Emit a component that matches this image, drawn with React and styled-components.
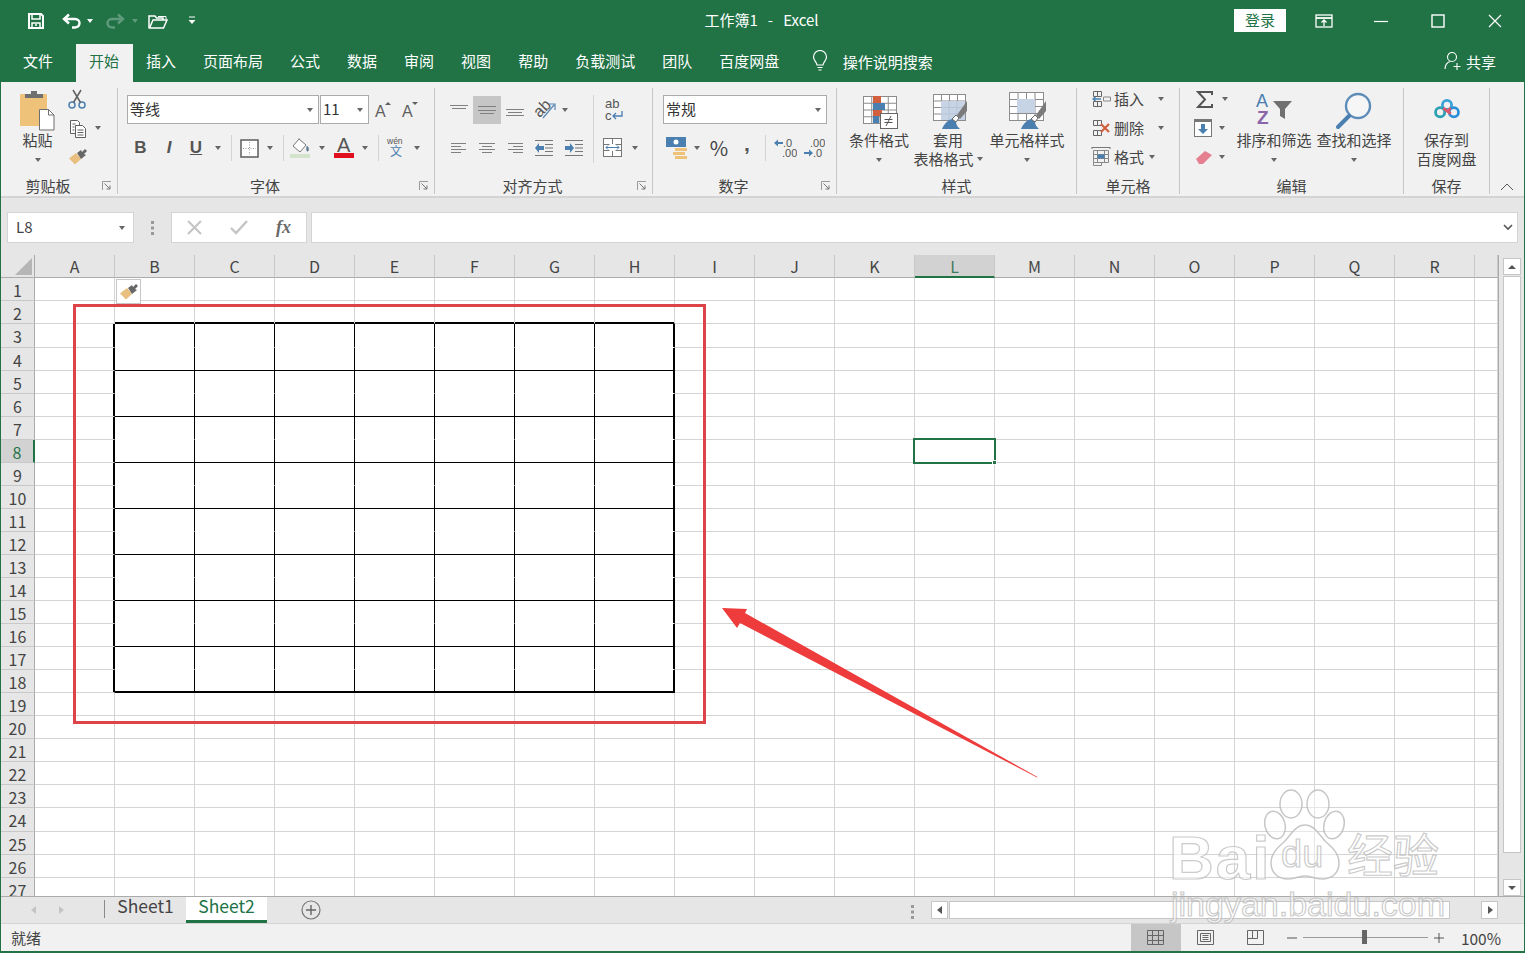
import React from "react";
import styled, { createGlobalStyle } from "styled-components";

const GREEN = "#217346";
const FONT = `"Noto Sans CJK SC", "Noto Sans", sans-serif`;
const INK = "#444";

const Global = createGlobalStyle`
  html, body { margin: 0; padding: 0; background: #fff; overflow: hidden; }
  * { box-sizing: border-box; }
`;

const Frame = styled.div`
  position: relative;
  width: 1525px;
  height: 953px;
  overflow: hidden;
  display: flex;
  flex-direction: column;
  border: solid ${GREEN};
  border-width: 0 1px 2px 1px;
  font-family: ${FONT};
  font-size: 15px;
  color: ${INK};
  background: #e6e6e6;
`;

const Caret = styled.i`
  flex: none;
  display: block;
  width: 0;
  height: 0;
  margin-left: ${(p) => p.$ml || 0}px;
  border-style: solid;
  border-width: 4px 3.5px 0;
  border-color: ${(p) => p.$c || "#666"} transparent transparent;
`;

/* ---------- title bar ---------- */
const TitleBar = styled.div`
  height: 41px;
  margin: 0 -1px;
  background: ${GREEN};
  color: #fff;
  display: grid;
  grid-template-columns: 1fr auto 1fr;
  align-items: center;
`;
const Quick = styled.div`
  display: flex;
  align-items: center;
  padding-left: 27px;
`;
const Slot = styled.span`
  display: inline-flex;
  align-items: center;
  justify-content: center;
  flex: none;
  width: ${(p) => p.$w}px;
  height: ${(p) => p.$h || 26}px;
  margin-left: ${(p) => p.$ml || 0}px;
  background: ${(p) => (p.$on ? "#c6c6c6" : "transparent")};
`;
const Title = styled.div`
  font-size: 15px;
  white-space: pre;
  color: #fff;
  padding: 0 2px 2px 0;
`;
const WinControls = styled.div`
  display: flex;
  justify-content: flex-end;
  align-items: center;
  padding-right: 2px;
`;
const Login = styled.button`
  width: 52px;
  height: 23px;
  margin-right: 9px;
  border: 0;
  padding: 0 0 2px;
  background: #fff;
  color: ${GREEN};
  font: 15px/19px ${FONT};
`;

/* ---------- tab row ---------- */
const TabRow = styled.div`
  height: 41px;
  margin: 0 -1px;
  padding-left: 9.5px;
  background: ${GREEN};
  display: flex;
  align-items: flex-end;
`;
const RibbonTab = styled.div`
  height: 38px;
  padding: 0 13.5px;
  margin-right: ${(p) => p.$mr || 0}px;
  line-height: 34px;
  color: ${(p) => (p.$active ? GREEN : "#fff")};
  background: ${(p) => (p.$active ? "#f1f1f1" : "transparent")};
  white-space: nowrap;
`;
const SearchHint = styled.div`
  display: flex;
  align-items: center;
  height: 38px;
  padding-bottom: 4px;
  margin-left: 19px;
  gap: 15px;
  color: #fff;
`;
const Share = styled.div`
  margin-left: auto;
  margin-right: 29px;
  display: flex;
  align-items: center;
  height: 38px;
  padding-bottom: 4px;
  gap: 4px;
  color: #fff;
`;

/* ---------- ribbon ---------- */
const Ribbon = styled.div`
  height: 116px;
  padding-top: 6px;
  display: flex;
  background: #f1f1f1;
  border-bottom: 2px solid #d4d4d4;
`;
const Group = styled.section`
  flex: none;
  width: ${(p) => p.$w}px;
  height: 106px;
  display: flex;
  flex-direction: column;
  border-right: 1px solid #c6c6c6;
`;
const GroupBody = styled.div`
  height: 89px;
  display: flex;
  padding-left: ${(p) => p.$pl || 0}px;
`;
const GroupFoot = styled.div`
  height: 17px;
  display: flex;
  align-items: center;
`;
const GroupLabel = styled.div`
  flex: 1;
  text-align: center;
  font-size: 15px;
  line-height: 17px;
`;
const Launcher = styled.span`
  flex: none;
  width: 22px;
  display: flex;
  justify-content: center;
  padding-left: 2px;
`;
const Big = styled.div`
  flex: none;
  width: ${(p) => p.$w}px;
  padding-top: 2px;
  display: flex;
  flex-direction: column;
  align-items: center;
  text-align: center;
`;
const BigIcon = styled.div`
  height: 41px;
  padding-bottom: ${(p) => p.$pb || 0}px;
  display: flex;
  align-items: center;
  justify-content: center;
`;
const BigLine = styled.div`
  height: 19px;
  padding-bottom: 2px;
  line-height: 17px;
  font-size: 15px;
  white-space: nowrap;
  display: flex;
  align-items: center;
  justify-content: center;
  gap: 3px;
`;
const BigCaret = styled(BigLine)`
  padding-bottom: 0;
`;
const ToolCol = styled.div`
  flex: none;
  width: ${(p) => (p.$w ? p.$w + "px" : "auto")};
  padding-left: ${(p) => p.$pl || 0}px;
  display: flex;
  flex-direction: column;
  gap: 7px;
`;
const SmallRow = styled.div`
  height: 22px;
  display: flex;
  align-items: center;
`;
const RowsCol = styled.div`
  padding-top: 7px;
  display: flex;
  flex-direction: column;
  gap: 11px;
  flex: none;
  width: ${(p) => (p.$w ? p.$w + "px" : "auto")};
`;
const ToolRow = styled.div`
  display: flex;
  align-items: ${(p) => (p.$tall ? "flex-end" : "center")};
  height: ${(p) => (p.$tall ? 29 : 26)}px;
`;
const Sep = styled.span`
  flex: none;
  width: 1px;
  height: 26px;
  background: #d4d4d4;
  margin: 0 ${(p) => p.$m}px 0 ${(p) => p.$m}px;
`;
const VSep = styled.div`
  flex: none;
  width: 1px;
  height: 68px;
  margin-top: 7px;
  background: #d4d4d4;
`;
const Combo = styled.div`
  flex: none;
  width: ${(p) => p.$w}px;
  height: 29px;
  background: #fff;
  border: 1px solid #ababab;
  margin-right: ${(p) => p.$mr || 0}px;
  padding: 0 5px 2px 2px;
  display: flex;
  align-items: center;
  justify-content: space-between;
  font-size: 15px;
  color: #333;
  ${Caret} { margin-top: 2px; }
`;
const TextSpan = styled.span`
  font-size: ${(p) => p.$s || 15}px;
  margin-left: ${(p) => p.$ml || 0}px;
  padding-bottom: 2px;
  white-space: nowrap;
`;
const Collapse = styled.div`
  margin-left: 10px;
  align-self: flex-end;
  margin-bottom: 1px;
`;

/* ---------- formula bar ---------- */
const FormulaBar = styled.div`
  height: 57px;
  padding: 14px 6px 0;
  display: flex;
  background: #e6e6e6;
`;
const InputBox = styled.div`
  flex: ${(p) => (p.$w ? "none" : "1")};
  width: ${(p) => (p.$w ? p.$w + "px" : "auto")};
  height: 31px;
  background: #fff;
  border: 1px solid #d4d4d4;
  display: flex;
  align-items: center;
  justify-content: ${(p) => (p.$between ? "space-between" : "flex-start")};
  padding: ${(p) => p.$pad || "0"};
  font-size: 15px;
  margin-left: ${(p) => p.$ml || 0}px;
  ${Caret} { margin-top: 2px; }
`;
const Grip = styled.div`
  flex: none;
  width: 37px;
  display: flex;
  justify-content: center;
  align-items: center;
  height: 31px;
`;

/* ---------- sheet ---------- */
const SheetArea = styled.div`
  height: 641px;
  display: flex;
  overflow: hidden;
`;
const SheetGrid = styled.div`
  flex: none;
  width: 1497px;
  height: 641px;
  overflow: hidden;
  display: grid;
  grid-template-columns: 34px repeat(18, 80px) 23px;
  grid-template-rows: 23.4px;
  grid-auto-rows: 23.06px;
  background: #fff;
`;
const Corner = styled.div`
  background: #e6e6e6;
  border-right: 1px solid #ababab;
  border-bottom: 1px solid #ababab;
  display: flex;
  align-items: flex-end;
  justify-content: flex-end;
  padding: 0 2px 2px 0;
`;
const ColHead = styled.div`
  background: ${(p) => (p.$on ? "#d2d2d2" : "#e6e6e6")};
  border-right: 1px solid #c8c8c8;
  border-bottom: ${(p) => (p.$on ? `2px solid ${GREEN}` : "1px solid #ababab")};
  color: ${(p) => (p.$on ? "#3f7a5c" : INK)};
  text-align: center;
  font-size: 16px;
  line-height: 22px;
`;
const RowHead = styled.div`
  background: ${(p) => (p.$on ? "#d2d2d2" : "#e6e6e6")};
  border-right: ${(p) => (p.$on ? `2px solid ${GREEN}` : "1px solid #ababab")};
  border-bottom: 1px solid #c8c8c8;
  color: ${(p) => (p.$on ? GREEN : INK)};
  text-align: center;
  font-size: 16px;
  line-height: 24px;
  overflow: hidden;
`;
const Cell = styled.div`
  position: relative;
  background: #fff;
  border-right: 1px solid ${(p) => p.$r};
  border-bottom: 1px solid ${(p) => p.$b};
  box-shadow: ${(p) => p.$shadow || "none"};
`;
const Selection = styled.div`
  position: absolute;
  z-index: 3;
  left: -2px;
  top: -2px;
  width: 83px;
  height: 26px;
  border: 2px solid ${GREEN};
`;
const Handle = styled.div`
  position: absolute;
  right: -3px;
  bottom: -3px;
  width: 5px;
  height: 5px;
  background: ${GREEN};
  border: 1px solid #fff;
`;
const PasteBadge = styled.div`
  position: absolute;
  z-index: 3;
  left: 1px;
  top: 1px;
  width: 25px;
  height: 25px;
  background: #fff;
  border: 1px solid #c6c6c6;
  display: flex;
  align-items: center;
  justify-content: center;
`;
const VScroll = styled.div`
  flex: 1;
  padding: 3px 0 0 4px;
  display: flex;
  flex-direction: column;
  background: #e6e6e6;
  border-left: 1px solid #ababab;
`;
const ScrollBtn = styled.div`
  flex: none;
  width: ${(p) => p.$w}px;
  height: ${(p) => p.$h}px;
  background: #fff;
  border: 1px solid #c6c6c6;
  display: flex;
  align-items: center;
  justify-content: center;
  margin-top: ${(p) => p.$mt || 0}px;
  margin-left: ${(p) => p.$ml || 0}px;
`;

/* ---------- tab bar ---------- */
const SheetTabs = styled.div`
  height: 28px;
  display: flex;
  align-items: flex-start;
  background: #e6e6e6;
  border-top: 1px solid #ababab;
  border-bottom: 1px solid #d4d4d4;
  padding-left: 19px;
`;
const NavSep = styled.span`
  flex: none;
  width: 1px;
  height: 18px;
  margin: 3px 0 0 30px;
  background: #8a8a8a;
`;
const SheetTab = styled.div`
  flex: none;
  width: 81px;
  height: 26px;
  text-align: center;
  font-size: 17.5px;
  line-height: 18px;
  background: ${(p) => (p.$active ? "#fff" : "transparent")};
  color: ${(p) => (p.$active ? GREEN : INK)};
  border-bottom: ${(p) => (p.$active ? `3px solid ${GREEN}` : "0")};
`;
const AddSheet = styled.div`
  flex: none;
  margin: 3px 0 0 34px;
  height: 20px;
`;
const TabGrip = styled.div`
  flex: none;
  margin: 6px 0 0 auto;
  height: 16px;
`;
const HScroll = styled.div`
  flex: none;
  width: 567px;
  height: 18px;
  margin: 4px 26px 0 16px;
  display: flex;
`;
const HThumb = styled.div`
  flex: none;
  width: 501px;
  margin-left: 1px;
  height: 18px;
  background: #fff;
  border: 1px solid #c6c6c6;
`;

/* ---------- status bar ---------- */
const StatusBar = styled.div`
  flex: 1;
  display: flex;
  align-items: center;
  background: #f1f1f1;
  font-size: 15px;
  padding-left: 10px;
`;
const StatusRight = styled.div`
  margin-left: auto;
  display: flex;
  align-items: center;
  height: 100%;
  padding-right: 23px;
`;
const ViewBtn = styled.div`
  flex: none;
  width: 50px;
  height: 100%;
  display: flex;
  align-items: center;
  justify-content: center;
  background: ${(p) => (p.$on ? "#c6c6c6" : "transparent")};
`;
const Zoomer = styled.div`
  position: relative;
  flex: none;
  width: 125px;
  height: 1px;
  background: #9a9a9a;
`;
const ZoomThumb = styled.div`
  position: absolute;
  left: 59px;
  top: -7px;
  width: 5px;
  height: 14px;
  background: #666;
`;
const ZoomPct = styled.div`
  margin-left: 11px;
  font-size: 15.5px;
`;

/* ---------- overlays ---------- */
const RedBox = styled.div`
  position: absolute;
  z-index: 5;
  left: 72px;
  top: 304px;
  width: 633px;
  height: 420px;
  border: 3.5px solid #dc4449;
  pointer-events: none;
`;
const ArrowLayer = styled.svg`
  position: absolute;
  z-index: 5;
  left: 714px;
  top: 600px;
`;
const Watermark = styled.div`
  position: absolute;
  z-index: 6;
  left: 1164px;
  top: 785px;
  width: 290px;
  height: 140px;
  pointer-events: none;
`;
const Mark = styled.span`
  position: absolute;
  left: ${(p) => p.$x}px;
  top: ${(p) => p.$y}px;
  font-family: ${(p) => p.$f || `"Liberation Sans", sans-serif`};
  font-size: ${(p) => p.$s}px;
  font-weight: ${(p) => p.$wt || 400};
  line-height: 1;
  letter-spacing: ${(p) => p.$ls || 0}px;
  color: rgba(255, 255, 255, 0.55);
  -webkit-text-stroke: 1.2px rgba(185, 185, 185, 0.75);
  white-space: nowrap;
`;
const PawSvg = styled.svg`
  position: absolute;
  left: 90px;
  top: 4px;
`;

/* ---------- icons ---------- */
const G = "#5f5f5f";
const BLUE = "#4a7fb0";

const Save = () => (
  <svg width="18" height="18" viewBox="0 0 18 18">
    <path d="M2 2h12l2 2v12H2z" fill="none" stroke="#fff" strokeWidth="2" />
    <path d="M5 3v4h8V3" fill="none" stroke="#fff" strokeWidth="1.5" />
    <path d="M5 16v-5h8v5M8 13h2" fill="none" stroke="#fff" strokeWidth="1.5" />
  </svg>
);
const Undo = ({ c = "#fff", flip }) => (
  <svg width="20" height="16" viewBox="0 0 20 16" transform={flip ? "scale(-1 1)" : undefined}>
    <path d="M7 1.5 2 6l5 4.5M2.5 6H13c6 0 6 8 0 8.5H10" fill="none" stroke={c} strokeWidth="2.4" />
  </svg>
);
const Folder = () => (
  <svg width="20" height="16" viewBox="0 0 20 16">
    <path d="M1 15V3h6l1.5 2H15v2" fill="none" stroke="#fff" strokeWidth="1.5" />
    <path d="M1.5 15 5 7h14l-3.5 8z" fill="none" stroke="#fff" strokeWidth="1.5" />
    <path d="M10 3.5h8V6" fill="none" stroke="#fff" strokeWidth="1" />
  </svg>
);
const QatMore = () => (
  <svg width="8" height="9" viewBox="0 0 8 9">
    <path d="M1 1h6" stroke="#fff" strokeWidth="1" />
    <path d="M0.5 4h7L4 8z" fill="#fff" />
  </svg>
);
const RibbonMode = () => (
  <svg width="18" height="14" viewBox="0 0 18 14">
    <rect x="1" y="1" width="16" height="12" fill="none" stroke="#fff" strokeWidth="1.3" />
    <path d="M1 4h16" stroke="#fff" strokeWidth="1.8" />
    <path d="M9 12V6M6.5 8.5 9 6l2.5 2.5" fill="none" stroke="#fff" strokeWidth="1.3" />
  </svg>
);
const MinI = () => (
  <svg width="14" height="14" viewBox="0 0 14 14"><path d="M0 7.5h14" stroke="#fff" strokeWidth="1.2" /></svg>
);
const MaxI = () => (
  <svg width="14" height="14" viewBox="0 0 14 14"><rect x="1" y="1" width="12" height="12" fill="none" stroke="#fff" strokeWidth="1.4" /></svg>
);
const CloseI = () => (
  <svg width="14" height="14" viewBox="0 0 14 14"><path d="M1 1l12 12M13 1 1 13" stroke="#fff" strokeWidth="1.2" /></svg>
);
const Bulb = () => (
  <svg width="16" height="22" viewBox="0 0 16 22">
    <path d="M5 15c0-3-3.5-4-3.5-8a6.5 6.5 0 0 1 13 0c0 4-3.5 5-3.5 8z" fill="none" stroke="#fff" strokeWidth="1.2" />
    <path d="M5.5 17.5h5M6.5 20h3" stroke="#fff" strokeWidth="1.2" />
  </svg>
);
const Person = () => (
  <svg width="18" height="20" viewBox="0 0 18 20">
    <circle cx="8" cy="6" r="4.5" fill="none" stroke="#fff" strokeWidth="1.1" />
    <path d="M1 18c0-4 2.5-7 5-7.5M13 12v7M9.5 15.5h7" fill="none" stroke="#fff" strokeWidth="1.1" />
  </svg>
);
const Corner3 = () => (
  <svg width="10" height="10" viewBox="0 0 10 10">
    <path d="M.5 9V.5H9" fill="none" stroke="#9a9a9a" />
    <path d="M2.5 2.5 8 8M8 4.5V8H4.5" fill="none" stroke="#777" />
  </svg>
);
const Paste = () => (
  <svg width="35" height="41" viewBox="0 0 35 41">
    <rect x="0" y="4" width="27" height="32" rx="1" fill="#efc27a" />
    <path d="M5 8V4h6V1h6v3h6v4z" fill="#6f6f6f" />
    <path d="M19.5 19.5h9l5.500 5.500v15h-14.500z" fill="#fff" stroke="#6f6f6f" />
    <path d="M28.500 19.500v5.500h5.500" fill="none" stroke="#6f6f6f" />
  </svg>
);
const Scissors = () => (
  <svg width="18" height="20" viewBox="0 0 18 20">
    <circle cx="4" cy="16" r="3" fill="none" stroke={BLUE} strokeWidth="1.5" />
    <circle cx="14" cy="16" r="3" fill="none" stroke={BLUE} strokeWidth="1.5" />
    <path d="M5.5 13.5 13 1M12.5 13.5 5 1" stroke={G} strokeWidth="1.5" />
  </svg>
);
const Copy = () => (
  <svg width="18" height="19" viewBox="0 0 18 19" fill="#fff" stroke={G}>
    <path d="M1.5 1.5h7l2 2v11h-9z" />
    <path d="M6.5 6.5h7l3 3v9h-10z" />
    <path d="M3.5 5h3M3.5 8h2M3.5 11h2M8.5 11h6M8.5 13.5h6M8.5 16h6" fill="none" />
  </svg>
);
const Brush = () => (
  <svg width="18" height="16" viewBox="0 0 18 16">
    <path d="M0 9.500 7 4l5 6-6 5.500z" fill="#e8bf7f" />
    <path d="M8 4l4-3 1 2 3-3 2 2-3 3 2 1-5 4z" fill="#666" />
  </svg>
);
const SvgText = ({ x, y, s, c = G, w = 400, f = "Liberation Sans", children }) => (
  <text x={x} y={y} fontSize={s} fill={c} fontWeight={w} fontFamily={`"${f}", sans-serif`}>{children}</text>
);
const GrowA = ({ up }) => (
  <svg width="18" height="20" viewBox="0 0 18 20">
    <SvgText x="1" y="17" s="16" c={G}>A</SvgText>
    <path d={up ? "M11 5h6l-3-3z" : "M11 2h6l-3 3z"} fill={G} />
  </svg>
);
const Letter = styled.span`
  font-family: "Liberation Sans", sans-serif;
  font-size: 17px;
  font-weight: 700;
  font-style: ${(p) => (p.$i ? "italic" : "normal")};
  text-decoration: ${(p) => (p.$u ? "underline" : "none")};
  color: #555;
`;
const Comma = styled.span`
  font-family: "Liberation Sans", sans-serif;
  font-size: 21px;
  line-height: 18px;
  font-weight: 700;
  color: #555;
  padding-bottom: 8px;
`;
const Borders = () => (
  <svg width="19" height="19" viewBox="0 0 19 19">
    <rect x="1" y="1" width="17" height="17" fill="#fff" stroke="#666" strokeWidth="1.6" />
    <path d="M9.5 3v13M3 9.5h13" stroke="#999" strokeDasharray="1 1.5" />
  </svg>
);
const Fill = () => (
  <svg width="22" height="22" viewBox="0 0 22 22">
    <path d="M9 2 3 9l7 6 6-7z" fill="#fff" stroke="#777" />
    <path d="M17 9c2 2 2 4 1 5s-2-1-1-5zM9 2V1" fill={BLUE} stroke="#777" strokeWidth=".6" />
    <rect x="0" y="17" width="20" height="4" fill="#d4e4cc" />
  </svg>
);
const FontColor = () => (
  <svg width="20" height="24" viewBox="0 0 20 24">
    <SvgText x="3" y="16" s="20" c="#555">A</SvgText>
    <rect x="0" y="17" width="20" height="5" fill="#e00f1e" />
  </svg>
);
const Wen = () => (
  <svg width="20" height="26" viewBox="0 0 20 26">
    <SvgText x="1" y="9" s="8.5" c="#555">wén</SvgText>
    <SvgText x="4" y="21" s="12" c={BLUE} f="Noto Sans CJK SC">文</SvgText>
  </svg>
);
const Lines = ({ rows = [], w = 18 }) => (
  <svg width={w} height="16" viewBox={`0 0 ${w} 16`}>
    {rows.map((r, i) => (
      <path key={i} d={`M${r[0]} ${r[2]}h${r[1]}`} stroke={r[3] || "#808080"} />
    ))}
  </svg>
);
const Orient = () => (
  <svg width="24" height="24" viewBox="0 0 24 24">
    <g transform="rotate(-45 10 11)">
      <SvgText x="1" y="15" s="16" c="#555">ab</SvgText>
    </g>
    <path d="M10 20 21 7M16 6h6v6" fill="none" stroke="#5b87b3" strokeWidth="1.2" />
  </svg>
);
const Wrap = () => (
  <svg width="22" height="28" viewBox="0 0 22 28">
    <SvgText x="3" y="12" s="13" c="#555">ab</SvgText>
    <SvgText x="3" y="24" s="13" c="#555">c</SvgText>
    <path d="M20 15v5H11M14 17l-3 3 3 3" fill="none" stroke={BLUE} strokeWidth="1.3" />
  </svg>
);
const Indent = ({ flip }) => (
  <svg width="20" height="16" viewBox="0 0 20 16">
    <path d="M1 .5h18M11 4.5h8M11 8h8M11 11.5h8M1 15.5h18" stroke="#777" />
    <path d={flip ? "M1 6h5V3l4 5-4 5v-3H1z" : "M10 6H5V3L1 8l4 5v-3h5z"} fill={BLUE} />
  </svg>
);
const Merge = () => (
  <svg width="20" height="20" viewBox="0 0 20 20">
    <rect x=".5" y=".5" width="18" height="18" fill="#fff" stroke="#777" />
    <path d="M.5 6.5h6M12.5 6.5h6M.5 12.5h6M12.5 12.5h6M9.5 1v5M9.5 13v6" stroke="#777" />
    <path d="M3 9.5h13M5 7.5l-2 2 2 2M14 7.5l2 2-2 2" fill="none" stroke={BLUE} />
  </svg>
);
const Currency = () => (
  <svg width="22" height="22" viewBox="0 0 22 22">
    <rect x="0" y="0" width="20" height="10" fill={BLUE} />
    <circle cx="10" cy="5" r="2.5" fill="#fff" />
    <rect x="9" y="11" width="12" height="3" fill="#eec27a" />
    <rect x="7" y="15" width="12" height="3" fill="#eec27a" />
    <rect x="9" y="19" width="12" height="3" fill="#eec27a" />
  </svg>
);
const Decimal = ({ inc }) => (
  <svg width="24" height="22" viewBox="0 0 24 22">
    <SvgText x={inc ? 9 : 10} y="10" s="11" c="#555">{inc ? ".00" : ".0"}</SvgText>
    <SvgText x={inc ? 12 : 9} y="20" s="11" c="#555">{inc ? ".0" : ".00"}</SvgText>
    {inc ? (
      <path d="M3 15h5v-2.500l4 3.500-4 3.500V17H3z" fill={BLUE} />
    ) : (
      <path d="M10 5H5V2.500L1 6l4 3.500V7h5z" fill={BLUE} />
    )}
  </svg>
);
const GridBase = ({ x = 0, y = 0, w = 36, h = 36 }) => {
  const cw = w / 4;
  const ch = h / 4;
  return (
    <g fill="none" stroke="#8c8c8c">
      <rect x={x + 0.5} y={y + 0.5} width={w} height={h} fill="#fff" />
      {[1, 2, 3].map((i) => (
        <path key={i} d={`M${x + i * cw + 0.5} ${y}v${h}M${x} ${y + i * ch + 0.5}h${w}`} />
      ))}
    </g>
  );
};
const CondFormat = () => (
  <svg width="38" height="36" viewBox="0 0 38 36">
    <GridBase x={3} y={3} w={33} h={27} />
    <rect x="13" y="3" width="8" height="7" fill="#d2603f" />
    <rect x="13" y="10" width="12" height="7" fill={BLUE} />
    <rect x="13" y="17" width="9" height="6" fill="#d2603f" />
    <rect x="13" y="23" width="6" height="7" fill={BLUE} />
    <rect x="20.5" y="20.5" width="17" height="15" fill="#fff" stroke="#666" />
    <path d="M26 33l5-10M24.500 26.500h8M24.500 29.500h8" stroke="#555" strokeWidth="1" />
  </svg>
);
const Pen = () => (
  <g>
    <path d="M13 37c2-5 6-9 10-10l4 3c0 3 2 5 4 7z" fill={BLUE} />
    <path d="M23 27l4-4 3 3-3 4z" fill="#fff" stroke="#666" />
    <path d="M28 23 38 9v10l-7 8z" fill="#7b7b7b" />
  </g>
);
const TableFormat = () => (
  <svg width="38" height="37" viewBox="0 0 38 37">
    <GridBase x={4} y={2} w={32} h={26} />
    <rect x="12" y="9" width="24" height="19" fill="#c7d4e6" />
    <path d="M20 9v19M28 9v19M12 15.500h24M12 22h24" stroke="#b7c3d6" />
    <Pen />
  </svg>
);
const CellStyle = () => (
  <svg width="38" height="37" viewBox="0 0 38 37">
    <GridBase x={1} y={0} w={34} h={28} />
    <rect x="9" y="7" width="18" height="14" fill="#c7d4e6" />
    <Pen />
  </svg>
);
const InsertI = () => (
  <svg width="19" height="18" viewBox="0 0 19 18" fill="none" stroke="#666">
    <path d="M1.5 1.5h8v5h-8zM5.5 1.5v5M1.5 11.5h8v5h-8zM5.5 11.5v5" />
    <path d="M11.5 7h7v4h-7z" stroke="#888" />
    <path d="M1 9h8M3.5 7 1 9l2.5 2" stroke={BLUE} strokeWidth="1.4" />
  </svg>
);
const DeleteI = () => (
  <svg width="19" height="18" viewBox="0 0 19 18" fill="none" stroke="#666">
    <path d="M1.5 1.5h8v5h-8zM5.5 1.5v5M1.5 11.5h8v5h-8zM5.5 11.5v5" />
    <path d="M9 5l8 8M17 5l-8 8" stroke="#d2603f" strokeWidth="2.2" />
  </svg>
);
const FormatI = () => (
  <svg width="20" height="20" viewBox="0 0 20 20" fill="none" stroke="#666">
    <path d="M1 .5h18M1 0v2M19 0v2" stroke="#777" />
    <path d="M2.5 3.5h15v12h-15zM2.5 7.5h15M2.5 11.5h15M6.5 3.5v12M13.5 3.5v12" stroke="#888" />
    <rect x="6.5" y="7.5" width="7" height="4" fill={BLUE} stroke="none" />
    <path d="M2.5 15.5v3h8v-3" stroke="#888" />
  </svg>
);
const Sigma = () => (
  <svg width="17" height="17" viewBox="0 0 17 17">
    <path d="M16 4V1H2l7 7.5L2 16h14v-3" fill="none" stroke="#555" strokeWidth="2" />
  </svg>
);
const FillDown = () => (
  <svg width="18" height="18" viewBox="0 0 18 18">
    <rect x=".5" y=".5" width="17" height="17" fill="#fff" stroke="#777" />
    <rect x="0" y="0" width="18" height="3" fill="#777" />
    <path d="M7 5h4v5h3l-5 5-5-5h3z" fill={BLUE} />
  </svg>
);
const Eraser = () => (
  <svg width="18" height="16" viewBox="0 0 18 16">
    <path d="M1 10 10 2l7 4-9 9H4z" fill="#e67f90" />
  </svg>
);
const SortI = () => (
  <svg width="40" height="36" viewBox="0 0 40 36">
    <SvgText x="2" y="14" s="18" c={BLUE}>A</SvgText>
    <SvgText x="3" y="31" s="19" c="#8a66a8" w={700}>Z</SvgText>
    <path d="M19 8h19l-7 8v10l-5-3v-7z" fill="#707070" />
  </svg>
);
const FindI = () => (
  <svg width="36" height="38" viewBox="0 0 36 38">
    <circle cx="22" cy="14" r="12" fill="#fff" fillOpacity=".4" stroke="#5d8cb9" strokeWidth="2.4" />
    <path d="M13 24 2 35" stroke="#4a7fb0" strokeWidth="4" strokeLinecap="round" />
  </svg>
);
const CloudI = () => (
  <svg width="28" height="22" viewBox="0 0 30 24" fill="none">
    <circle cx="15" cy="7.5" r="5" stroke="#37a1d8" strokeWidth="3" />
    <circle cx="7.5" cy="15.5" r="5" stroke="#2c9fb3" strokeWidth="3" />
    <circle cx="22.5" cy="15.5" r="5" stroke="#2a8fd6" strokeWidth="3" />
    <path d="M11 11l8 6" stroke="#e1556b" strokeWidth="3" />
    <path d="M19 11l-4 4" stroke="#e1556b" strokeWidth="3" />
  </svg>
);
const ChevUp = () => (
  <svg width="14" height="8" viewBox="0 0 14 8"><path d="M1 7l6-6 6 6" fill="none" stroke="#555" /></svg>
);
const ChevDown = () => (
  <svg width="10" height="7" viewBox="0 0 10 7"><path d="M1 1l4 4 4-4" fill="none" stroke="#555" strokeWidth="1.6" /></svg>
);
const Dots = () => (
  <svg width="4" height="16" viewBox="0 0 4 16" fill="#999">
    <rect x="0" y="1" width="3" height="3" /><rect x="0" y="6.5" width="3" height="3" /><rect x="0" y="12" width="3" height="3" />
  </svg>
);
const CrossI = () => (
  <svg width="17" height="15" viewBox="0 0 17 15"><path d="M2 1l13 13M15 1 2 14" stroke="#c4c4c4" strokeWidth="2" /></svg>
);
const CheckI = () => (
  <svg width="18" height="15" viewBox="0 0 18 15"><path d="M1 8l5 5L17 1" fill="none" stroke="#c4c4c4" strokeWidth="2.4" /></svg>
);
const Fx = () => (
  <svg width="18" height="22" viewBox="0 0 18 22">
    <text x="1" y="16" fontSize="18" fill="#6a6a6a" fontStyle="italic" fontWeight="700" fontFamily={`"Liberation Serif", serif`}>fx</text>
  </svg>
);
const Tri = ({ d, c = "#555", w = 8, h = 8 }) => (
  <svg width={w} height={h} viewBox="0 0 8 8"><path d={d} fill={c} /></svg>
);
const PlusCircle = () => (
  <svg width="20" height="20" viewBox="0 0 20 20">
    <circle cx="10" cy="10" r="9" fill="none" stroke="#777" strokeWidth="1.2" />
    <path d="M10 5v10M5 10h10" stroke="#666" strokeWidth="1.4" />
  </svg>
);
const ViewNormal = () => (
  <svg width="17" height="15" viewBox="0 0 17 15" fill="none" stroke="#666">
    <path d="M.5.5h16v14H.5zM5.5.5v14M11.5.5v14M.5 5.5h16M.5 10.5h16" />
  </svg>
);
const ViewPage = () => (
  <svg width="17" height="15" viewBox="0 0 17 15" fill="none" stroke="#666">
    <path d="M.5.5h16v14H.5zM3.5 3.5h10v8h-10zM5.5 5.5h6M5.5 7.5h6M5.5 9.5h6" />
  </svg>
);
const ViewBreak = () => (
  <svg width="17" height="15" viewBox="0 0 17 15" fill="none" stroke="#666">
    <path d="M.5.5h16v14H.5zM.5 8.5h10v-8M5.5.5v8" />
  </svg>
);
const Paw = () => (
  <PawSvg width="100" height="92" viewBox="0 0 100 92" fill="rgba(255,255,255,.45)" stroke="rgba(185,185,185,.8)" strokeWidth="1.5">
    <ellipse cx="36" cy="15" rx="11" ry="14" />
    <ellipse cx="63" cy="15" rx="11" ry="14" />
    <ellipse cx="20" cy="36" rx="10" ry="14" transform="rotate(-15 20 36)" />
    <ellipse cx="79" cy="36" rx="10" ry="14" transform="rotate(15 79 36)" />
    <path d="M50 36c-10 0-14 10-21 17-7 6-13 12-13 21 0 10 7 16 17 16 8 0 11-3 17-3s9 3 17 3c10 0 17-6 17-16 0-9-6-15-13-21-7-7-11-17-21-17z" />
  </PawSvg>
);

/* ---------- data ---------- */
const COLS = "ABCDEFGHIJKLMNOPQR".split("");
const ROWS = Array.from({ length: 27 }, (_, i) => i + 1);
const TABS = ["插入", "页面布局", "公式", "数据", "审阅", "视图", "帮助", "负载测试", "团队", "百度网盘"];
const GRID = "#d4d4d4";
const INK_B = "#000";

function cellStyle(r, c) {
  // c: 0 = A ... 18 = overflow column
  const inCols = c >= 1 && c <= 7;
  const inRows = r >= 3 && r <= 18;
  const inTable = inCols && inRows;
  let right = GRID;
  let bottom = GRID;
  const sh = [];
  if (inTable) {
    right = INK_B;
    bottom = r % 2 === 0 ? INK_B : "transparent";
    if (r === 18) sh.push(`inset 0 -1px 0 ${INK_B}`);
    if (c === 7) sh.push(`inset -1px 0 0 ${INK_B}`);
  }
  if (c === 0 && inRows) {
    right = INK_B;
    sh.push(`inset -1px 0 0 ${INK_B}`);
  }
  if (inCols && r === 2) {
    bottom = INK_B;
    sh.push(`inset 0 -1px 0 ${INK_B}`);
  }
  return { right, bottom, shadow: sh.join(", ") };
}

const Sheet = () => (
  <SheetGrid>
    <Corner>
      <svg width="17" height="17" viewBox="0 0 17 17"><path d="M17 0v17H0z" fill="#b5b5b5" /></svg>
    </Corner>
    {COLS.map((c) => (
      <ColHead key={c} $on={c === "L"}>{c}</ColHead>
    ))}
    <ColHead />
    {ROWS.map((r) => (
      <React.Fragment key={r}>
        <RowHead $on={r === 8}>{r}</RowHead>
        {[...COLS, ""].map((c, i) => {
          const s = cellStyle(r, i);
          return (
            <Cell key={i} $r={s.right} $b={s.bottom} $shadow={s.shadow}>
              {r === 1 && c === "B" && (
                <PasteBadge><Brush /></PasteBadge>
              )}
              {r === 8 && c === "L" && (
                <Selection><Handle /></Selection>
              )}
            </Cell>
          );
        })}
      </React.Fragment>
    ))}
  </SheetGrid>
);

const AlignTop = () => <Lines w={20} rows={[[1, 18, 3.5], [3, 14, 6.5]]} />;
const AlignMid = () => <Lines w={20} rows={[[1, 18, 4.5], [1, 18, 8.5], [3, 14, 11.5]]} />;
const AlignBot = () => <Lines w={20} rows={[[1, 18, 7.5], [3, 14, 10.5], [1, 18, 13.5]]} />;
const HLeft = () => <Lines rows={[[1, 15, 3.5], [1, 10, 6.5], [1, 15, 9.5], [1, 10, 12.5]]} />;
const HCenter = () => <Lines rows={[[1, 16, 3.5], [4, 10, 6.5], [1, 16, 9.5], [4, 10, 12.5]]} />;
const HRight = () => <Lines rows={[[2, 15, 3.5], [7, 10, 6.5], [2, 15, 9.5], [7, 10, 12.5]]} />;

export default function App() {
  return (
    <Frame>
      <Global />
      <TitleBar>
        <Quick>
          <Slot $w={18}><Save /></Slot>
          <Slot $w={20} $ml={17}><Undo /></Slot>
          <Slot $w={8} $ml={4}><Caret $c="#fff" /></Slot>
          <Slot $w={20} $ml={11}><Undo c="#5f9a7c" flip /></Slot>
          <Slot $w={8} $ml={6}><Caret $c="#5f9a7c" /></Slot>
          <Slot $w={20} $ml={9}><Folder /></Slot>
          <Slot $w={8} $ml={20}><QatMore /></Slot>
        </Quick>
        <Title>工作簿1   -   Excel</Title>
        <WinControls>
          <Login>登录</Login>
          <Slot $w={57}><RibbonMode /></Slot>
          <Slot $w={57}><MinI /></Slot>
          <Slot $w={57}><MaxI /></Slot>
          <Slot $w={57}><CloseI /></Slot>
        </WinControls>
      </TitleBar>

      <TabRow>
        <RibbonTab $mr={9}>文件</RibbonTab>
        <RibbonTab $active>开始</RibbonTab>
        {TABS.map((t) => (
          <RibbonTab key={t}>{t}</RibbonTab>
        ))}
        <SearchHint><Bulb />操作说明搜索</SearchHint>
        <Share><Person />共享</Share>
      </TabRow>

      <Ribbon>
        <Group $w={117}>
          <GroupBody $pl={8}>
            <Big $w={57}>
              <BigIcon><Paste /></BigIcon>
              <BigLine>粘贴</BigLine>
              <BigCaret><Caret /></BigCaret>
            </Big>
            <ToolCol>
              <SmallRow><Slot $w={22}><Scissors /></Slot></SmallRow>
              <SmallRow><Slot $w={24}><Copy /></Slot><Caret $ml={5} /></SmallRow>
              <SmallRow><Slot $w={24}><Brush /></Slot></SmallRow>
            </ToolCol>
          </GroupBody>
          <GroupFoot><GroupLabel>剪贴板</GroupLabel><Launcher><Corner3 /></Launcher></GroupFoot>
        </Group>

        <Group $w={317}>
          <GroupBody $pl={9}>
            <RowsCol>
              <ToolRow $tall>
                <Combo $w={192} $mr={1}>等线<Caret /></Combo>
                <Combo $w={49}>11<Caret /></Combo>
                <Slot $w={28} $h={29}><GrowA up /></Slot>
                <Slot $w={26} $h={29}><GrowA /></Slot>
              </ToolRow>
              <ToolRow>
                <Slot $w={27}><Letter>B</Letter></Slot>
                <Slot $w={30}><Letter $i>I</Letter></Slot>
                <Slot $w={24}><Letter $u>U</Letter></Slot>
                <Slot $w={20}><Caret /></Slot>
                <Sep $m={2.5} />
                <Slot $w={30}><Borders /></Slot>
                <Slot $w={12}><Caret /></Slot>
                <Sep $m={6.5} />
                <Slot $w={22}><Fill /></Slot>
                <Slot $w={20}><Caret /></Slot>
                <Slot $w={24}><FontColor /></Slot>
                <Slot $w={18}><Caret /></Slot>
                <Sep $m={3.5} />
                <Slot $w={28}><Wen /></Slot>
                <Slot $w={14}><Caret /></Slot>
              </ToolRow>
            </RowsCol>
          </GroupBody>
          <GroupFoot><GroupLabel>字体</GroupLabel><Launcher><Corner3 /></Launcher></GroupFoot>
        </Group>

        <Group $w={218}>
          <GroupBody $pl={10}>
            <RowsCol $w={148}>
              <ToolRow $tall>
                <Slot $w={28} $h={28}><AlignTop /></Slot>
                <Slot $w={28} $h={28} $on><AlignMid /></Slot>
                <Slot $w={28} $h={28}><AlignBot /></Slot>
                <Slot $w={32} $h={28}><Orient /></Slot>
                <Slot $w={8} $h={28}><Caret /></Slot>
              </ToolRow>
              <ToolRow>
                <Slot $w={28}><HLeft /></Slot>
                <Slot $w={28}><HCenter /></Slot>
                <Slot $w={28}><HRight /></Slot>
                <Slot $w={30}><Indent /></Slot>
                <Slot $w={30}><Indent flip /></Slot>
              </ToolRow>
            </RowsCol>
            <VSep />
            <RowsCol>
              <ToolRow $tall><Slot $w={38} $h={29}><Wrap /></Slot></ToolRow>
              <ToolRow><Slot $w={38}><Merge /></Slot><Caret $ml={0} /></ToolRow>
            </RowsCol>
          </GroupBody>
          <GroupFoot><GroupLabel>对齐方式</GroupLabel><Launcher><Corner3 /></Launcher></GroupFoot>
        </Group>

        <Group $w={184}>
          <GroupBody $pl={10}>
            <RowsCol>
              <ToolRow $tall>
                <Combo $w={164}>常规<Caret /></Combo>
              </ToolRow>
              <ToolRow>
                <Slot $w={28}><Currency /></Slot>
                <Slot $w={12}><Caret /></Slot>
                <Slot $w={32}><TextSpan $s={20}>%</TextSpan></Slot>
                <Slot $w={24}><Comma>,</Comma></Slot>
                <Sep $m={5.5} />
                <Slot $w={28}><Decimal /></Slot>
                <Slot $w={28}><Decimal inc /></Slot>
              </ToolRow>
            </RowsCol>
          </GroupBody>
          <GroupFoot><GroupLabel>数字</GroupLabel><Launcher><Corner3 /></Launcher></GroupFoot>
        </Group>

        <Group $w={240}>
          <GroupBody $pl={8}>
            <Big $w={68}>
              <BigIcon><CondFormat /></BigIcon>
              <BigLine>条件格式</BigLine>
              <BigCaret><Caret /></BigCaret>
            </Big>
            <Big $w={70}>
              <BigIcon><TableFormat /></BigIcon>
              <BigLine>套用</BigLine>
              <BigLine>表格格式<Caret /></BigLine>
            </Big>
            <Big $w={88}>
              <BigIcon><CellStyle /></BigIcon>
              <BigLine>单元格样式</BigLine>
              <BigCaret><Caret /></BigCaret>
            </Big>
          </GroupBody>
          <GroupFoot><GroupLabel>样式</GroupLabel></GroupFoot>
        </Group>

        <Group $w={103}>
          <GroupBody $pl={14}>
            <ToolCol>
              <SmallRow><Slot $w={20}><InsertI /></Slot><TextSpan $ml={3}>插入</TextSpan><Caret $ml={14} /></SmallRow>
              <SmallRow><Slot $w={20}><DeleteI /></Slot><TextSpan $ml={3}>删除</TextSpan><Caret $ml={14} /></SmallRow>
              <SmallRow><Slot $w={20}><FormatI /></Slot><TextSpan $ml={3}>格式</TextSpan><Caret $ml={5} /></SmallRow>
            </ToolCol>
          </GroupBody>
          <GroupFoot><GroupLabel>单元格</GroupLabel></GroupFoot>
        </Group>

        <Group $w={224}>
          <GroupBody>
            <ToolCol $w={54} $pl={12}>
              <SmallRow><Slot $w={24}><Sigma /></Slot><Caret $ml={6} /></SmallRow>
              <SmallRow><Slot $w={22}><FillDown /></Slot><Caret $ml={5} /></SmallRow>
              <SmallRow><Slot $w={24}><Eraser /></Slot><Caret $ml={3} /></SmallRow>
            </ToolCol>
            <Big $w={80}>
              <BigIcon><SortI /></BigIcon>
              <BigLine>排序和筛选</BigLine>
              <BigCaret><Caret /></BigCaret>
            </Big>
            <Big $w={80}>
              <BigIcon><FindI /></BigIcon>
              <BigLine>查找和选择</BigLine>
              <BigCaret><Caret /></BigCaret>
            </Big>
          </GroupBody>
          <GroupFoot><GroupLabel>编辑</GroupLabel></GroupFoot>
        </Group>

        <Group $w={86}>
          <GroupBody>
            <Big $w={85}>
              <BigIcon $pb={4}><CloudI /></BigIcon>
              <BigLine>保存到</BigLine>
              <BigLine>百度网盘</BigLine>
            </Big>
          </GroupBody>
          <GroupFoot><GroupLabel>保存</GroupLabel></GroupFoot>
        </Group>
        <Collapse><ChevUp /></Collapse>
      </Ribbon>

      <FormulaBar>
        <InputBox $w={127} $between $pad="0 8px 2px 8px">L8<Caret /></InputBox>
        <Grip><Dots /></Grip>
        <InputBox $w={136}>
          <Slot $w={44}><CrossI /></Slot>
          <Slot $w={46}><CheckI /></Slot>
          <Slot $w={44}><Fx /></Slot>
        </InputBox>
        <InputBox $ml={4} $between $pad="0 4px 0 0"><span /><ChevDown /></InputBox>
      </FormulaBar>

      <SheetArea>
        <Sheet />
        <VScroll>
          <ScrollBtn $w={18} $h={17}><Tri d="M0 6l4-4 4 4z" /></ScrollBtn>
          <ScrollBtn $w={18} $h={577} $mt={1} />
          <ScrollBtn $w={18} $h={17} $mt={26}><Tri d="M0 2l4 4 4-4z" /></ScrollBtn>
        </VScroll>
      </SheetArea>

      <SheetTabs>
        <Slot $w={27}><Tri d="M6 0v8L1 4z" c="#c4c4c4" /></Slot>
        <Slot $w={27}><Tri d="M2 0v8l5-4z" c="#c4c4c4" /></Slot>
        <NavSep />
        <SheetTab>Sheet1</SheetTab>
        <SheetTab $active>Sheet2</SheetTab>
        <AddSheet><PlusCircle /></AddSheet>
        <TabGrip><Dots /></TabGrip>
        <HScroll>
          <ScrollBtn $w={17} $h={18}><Tri d="M6 0v8L1 4z" /></ScrollBtn>
          <HThumb />
          <ScrollBtn $w={17} $h={18} $ml={31}><Tri d="M2 0v8l5-4z" /></ScrollBtn>
        </HScroll>
      </SheetTabs>

      <StatusBar>
        就绪
        <StatusRight>
          <ViewBtn $on><ViewNormal /></ViewBtn>
          <ViewBtn><ViewPage /></ViewBtn>
          <ViewBtn><ViewBreak /></ViewBtn>
          <Slot $w={22}><svg width="10" height="2" viewBox="0 0 10 2"><path d="M0 1h10" stroke="#555" /></svg></Slot>
          <Zoomer><ZoomThumb /></Zoomer>
          <Slot $w={22}><svg width="10" height="10" viewBox="0 0 10 10"><path d="M0 5h10M5 0v10" stroke="#555" /></svg></Slot>
          <ZoomPct>100%</ZoomPct>
        </StatusRight>
      </StatusBar>

      <RedBox />
      <ArrowLayer width="330" height="185" viewBox="715 600 330 185">
        <polygon points="722,608 747,609 745,613 1037.500,777 1037,777.500 740,623 737,628" fill="#ee3b3b" />
      </ArrowLayer>
      <Watermark>
        <Paw />
        <Mark $x={4} $y={42} $s={62} $wt={700} $ls={2}>Bai</Mark>
        <Mark $x={116} $y={50} $s={38}>du</Mark>
        <Mark $x={182} $y={44} $s={46} $f={FONT}>经验</Mark>
        <Mark $x={6} $y={102} $s={34}>jingyan.baidu.com</Mark>
      </Watermark>
    </Frame>
  );
}
